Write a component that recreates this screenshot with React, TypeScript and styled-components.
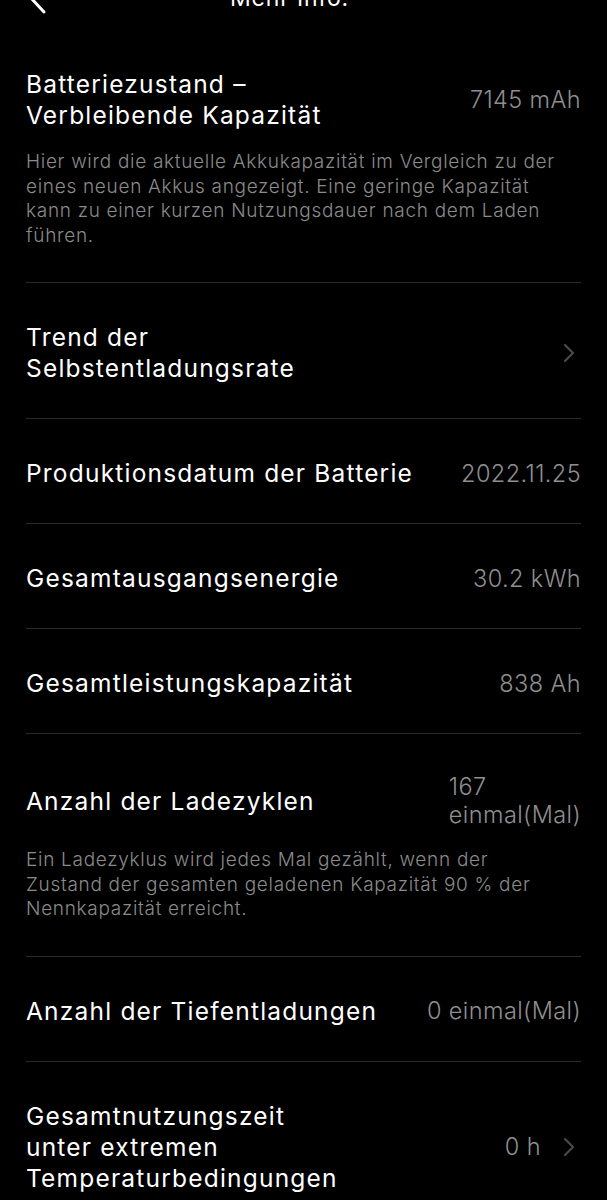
import React from 'react';
import styled, { createGlobalStyle } from 'styled-components';

const GlobalStyle = createGlobalStyle`
  html, body {
    margin: 0;
    padding: 0;
    background: #000;
  }
  body {
    font-family: Inter, "Noto Sans", "Liberation Sans", sans-serif;
    -webkit-font-smoothing: antialiased;
  }
`;

const Page = styled.div`
  width: 607px;
  height: 1200px;
  overflow: hidden;
  background: #000;
  color: #fff;
`;

// the header sits mostly above the top edge of the screenshot
const Header = styled.header`
  display: grid;
  grid-template-columns: 60px 1fr 60px;
  align-items: center;
  height: 64px;
  margin-top: -34px;
  padding: 0 26px;
`;

const BackButton = styled.button`
  display: flex;
  align-items: center;
  justify-content: flex-start;
  width: 40px;
  height: 40px;
  padding: 0;
  border: 0;
  background: transparent;
  color: #fff;
`;

const HeaderTitle = styled.h1`
  margin: 0;
  text-align: center;
  font-size: 23px;
  font-weight: 400;
  letter-spacing: 0.8px;
  color: #fff;
  padding-right: 28px;
`;

const List = styled.div`
  display: flex;
  flex-direction: column;
  padding: 0 26px;
`;

const Item = styled.section<{ $last?: boolean }>`
  display: flex;
  flex-direction: column;
  gap: 19px;
  padding: 39px 0 34px;
  border-bottom: ${({ $last }) => ($last ? 'none' : '1px solid #2b2b2b')};
`;

const Row = styled.div`
  display: flex;
  align-items: center;
  justify-content: space-between;
  gap: 16px;
`;

const Title = styled.div`
  font-size: 24.5px;
  line-height: 31px;
  font-weight: 400;
  letter-spacing: 1.2px;
  color: #fff;
  white-space: pre-line;
`;

const Side = styled.div`
  display: flex;
  align-items: center;
  gap: 22px;
  flex-shrink: 0;
`;

const Value = styled.div`
  font-size: 23.5px;
  line-height: 28px;
  font-weight: 300;
  letter-spacing: 0.4px;
  color: #8f8f8f;
  white-space: pre-line;
  text-align: left;
`;

const Chevron = styled.svg`
  width: 12px;
  height: 20px;
  margin-right: 6px;
  color: #4a4a4a;
`;

const Description = styled.p`
  margin: 0;
  padding-right: 14px;
  font-size: 19px;
  line-height: 24.5px;
  font-weight: 300;
  letter-spacing: 0.7px;
  color: #8b8b8b;
`;

type InfoItemProps = {
  title: string,
  value?: string,
  description?: string,
  link?: boolean,
  last?: boolean,
};

const InfoItem = ({
  title, value, description, link, last,
}: InfoItemProps) => {
  return (
    <Item $last={last}>
      <Row>
        <Title>{title}</Title>
        <Side>
          {value && <Value>{value}</Value>}
          {link && (
            <Chevron viewBox="0 0 12 20" fill="none">
              <path d="M2 2l8 8-8 8" stroke="currentColor" strokeWidth="2.2" strokeLinecap="round" strokeLinejoin="round" />
            </Chevron>
          )}
        </Side>
      </Row>
      {description && <Description>{description}</Description>}
    </Item>
  );
};

const items: InfoItemProps[] = [
  {
    title: 'Batteriezustand –\nVerbleibende Kapazität',
    value: '7145 mAh',
    description: 'Hier wird die aktuelle Akkukapazität im Vergleich zu der eines neuen Akkus angezeigt. Eine geringe Kapazität kann zu einer kurzen Nutzungsdauer nach dem Laden führen.',
  },
  { title: 'Trend der\nSelbstentladungsrate', link: true },
  { title: 'Produktionsdatum der Batterie', value: '2022.11.25' },
  { title: 'Gesamtausgangsenergie', value: '30.2 kWh' },
  { title: 'Gesamtleistungskapazität', value: '838 Ah' },
  {
    title: 'Anzahl der Ladezyklen',
    value: '167\neinmal(Mal)',
    description: 'Ein Ladezyklus wird jedes Mal gezählt, wenn der Zustand der gesamten geladenen Kapazität 90 % der Nennkapazität erreicht.',
  },
  { title: 'Anzahl der Tiefentladungen', value: '0 einmal(Mal)' },
  {
    title: 'Gesamtnutzungszeit\nunter extremen\nTemperaturbedingungen',
    value: '0 h',
    link: true,
    last: true,
  },
];

const App = () => {
  return (
    <Page>
      <GlobalStyle />
      <Header>
        <BackButton aria-label="Zurück">
          <svg width="22" height="36" viewBox="0 0 22 36" fill="none">
            <path d="M18 4L5 18l13 14" stroke="currentColor" strokeWidth="3" strokeLinecap="round" strokeLinejoin="round" />
          </svg>
        </BackButton>
        <HeaderTitle>Mehr Info.</HeaderTitle>
        <div />
      </Header>
      <List>
        {items.map((item) => (
          <InfoItem key={item.title} {...item} />
        ))}
      </List>
    </Page>
  );
};

export default App;
